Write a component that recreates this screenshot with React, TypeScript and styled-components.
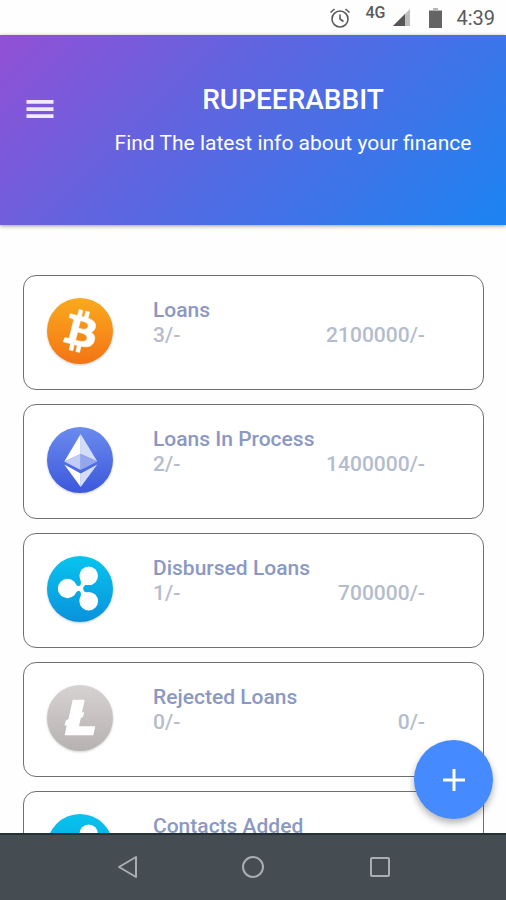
import React from "react";
import styled, { createGlobalStyle } from "styled-components";

const GlobalStyle = createGlobalStyle`
  *, *::before, *::after { box-sizing: border-box; }
  body {
    margin: 0;
    background: #fff;
    font-family: Roboto, "Liberation Sans", sans-serif;
  }
`;

const Screen = styled.div`
  display: flex;
  flex-direction: column;
  height: 100vh;
  overflow: hidden;
  background: #fefefe;
`;

const StatusBar = styled.div`
  display: flex;
  flex: none;
  align-items: center;
  justify-content: flex-end;
  height: 35px;
  padding: 0 11px;
  color: #5a5a5a;
`;

const NetworkLabel = styled.span`
  align-self: flex-start;
  margin: 4px 8px 0 14px;
  font-size: 16px;
  font-weight: 500;
  line-height: 18px;
`;

const Clock = styled.time`
  margin-left: 14px;
  font-size: 20px;
  line-height: 24px;
`;

const SignalIcon = styled.svg`
  margin-right: 19px;
`;

const Header = styled.header`
  display: flex;
  flex: none;
  align-items: flex-start;
  height: 190px;
  padding: 48px 0 0 22px;
  background: linear-gradient(135deg, #9250d5 0%, #5f65e0 40%, #1c84f2 100%);
  box-shadow: 0 1px 4px rgba(0, 0, 0, 0.4);
  color: #fff;
`;

const MenuButton = styled.button`
  display: flex;
  flex: none;
  margin: 8px 22px 0 0;
  padding: 0;
  border: 0;
  background: none;
  color: #f1eafc;
  cursor: pointer;
`;

const Heading = styled.div`
  flex: 1;
  text-align: center;
`;

const Title = styled.h1`
  margin: 0;
  font-size: 28px;
  font-weight: 500;
  line-height: 34px;
`;

const Subtitle = styled.p`
  margin: 13px 0 0;
  font-size: 21px;
  line-height: 26px;
`;

const Content = styled.main`
  position: relative;
  flex: 1;
  min-height: 0;
`;

const CardList = styled.ul`
  display: flex;
  flex-direction: column;
  gap: 14px;
  height: 100%;
  margin: 0;
  padding: 50px 22px 0 23px;
  overflow: hidden;
  list-style: none;
`;

const Card = styled.li`
  display: flex;
  flex: none;
  gap: 40px;
  height: 115px;
  padding: 22px 58px 0 23px;
  border: 1px solid #707070;
  border-radius: 13px;
  background: #fff;
`;

const CoinIcon = styled.svg`
  flex: none;
  width: 66px;
  height: 66px;
  overflow: visible;
  filter: drop-shadow(0 1px 1px rgba(0, 0, 0, 0.2));
`;

const CardBody = styled.div`
  flex: 1;
`;

const CardTitle = styled.h2`
  margin: 0;
  color: #8b98c4;
  font-size: 21px;
  font-weight: 500;
  line-height: 25px;
  white-space: nowrap;
`;

const Figures = styled.div`
  display: flex;
  justify-content: space-between;
  color: #b4bccd;
  font-size: 21px;
  font-weight: 500;
  line-height: 25px;
`;

const AddButton = styled.button`
  position: absolute;
  right: 13px;
  bottom: 14px;
  display: flex;
  align-items: center;
  justify-content: center;
  width: 79px;
  height: 79px;
  padding: 0;
  border: 0;
  border-radius: 50%;
  background: #468aff;
  box-shadow: 0 4px 7px rgba(0, 0, 0, 0.3);
  color: #fff;
  cursor: pointer;
`;

const NavBar = styled.nav`
  display: grid;
  grid-template-columns: repeat(3, 1fr);
  flex: none;
  height: 67px;
  padding: 0 12.5% 2px;
  border-top: 2px solid #243238;
  background: #464d52;
`;

const NavButton = styled.button`
  display: flex;
  align-items: center;
  justify-content: center;
  padding: 0;
  border: 0;
  background: none;
  color: #a9aeb0;
  cursor: pointer;
`;

type Coin = "bitcoin" | "ethereum" | "ripple" | "litecoin";

const coinColors: Record<Coin, [string, string]> = {
  bitcoin: ["#f9aa1e", "#f47414"],
  ethereum: ["#6b8bee", "#3c58dc"],
  ripple: ["#08c4ee", "#0a92dc"],
  litecoin: ["#d6d2d1", "#b7b2b1"],
};

const coinMarks: Record<Coin, React.ReactNode> = {
  bitcoin: (
    <path
      transform="translate(33 33) scale(2.15) translate(-16 -16)"
      fill="#fff"
      stroke="#fff"
      strokeWidth="0.3"
      d="M23.189 14.02c.314-2.096-1.283-3.223-3.465-3.975l.708-2.84-1.728-.43-.69 2.765c-.454-.114-.92-.22-1.385-.326l.695-2.783L15.596 6l-.708 2.839c-.376-.086-.746-.17-1.104-.26l.002-.009-2.384-.595-.46 1.846s1.283.294 1.256.312c.7.175.826.638.805 1.006l-.806 3.235c.048.012.11.03.18.057l-.183-.045-1.13 4.532c-.086.212-.303.531-.793.41.018.025-1.256-.313-1.256-.313l-.858 1.978 2.25.561c.418.105.828.215 1.231.318l-.715 2.872 1.727.43.708-2.84c.472.127.93.245 1.378.357l-.706 2.828 1.728.43.715-2.866c2.948.558 5.164.333 6.097-2.333.752-2.146-.037-3.385-1.588-4.192 1.13-.26 1.98-1.003 2.207-2.538zm-3.95 5.538c-.533 2.147-4.148.986-5.32.695l.95-3.805c1.172.293 4.929.872 4.37 3.11zm.535-5.569c-.487 1.953-3.495.96-4.47.717l.86-3.45c.975.243 4.118.696 3.61 2.733z"
    />
  ),
  ethereum: (
    <>
      <path d="M33.7 7 17.3 34.4 33.7 27z" fill="#fff" />
      <path d="M33.7 7 50.3 34.4 33.7 27z" fill="#d3dcf9" />
      <path d="M33.7 27 17.3 34.4 33.7 43z" fill="#c2cdf6" />
      <path d="M33.7 27 50.3 34.4 33.7 43z" fill="#94a6ee" />
      <path d="M17.3 37.5 33.7 46.5V60z" fill="#fff" />
      <path d="M50.3 37.5 33.7 46.5V60z" fill="#d3dcf9" />
    </>
  ),
  ripple: (
    <g fill="#fff">
      <circle cx="20.5" cy="32.5" r="9.7" />
      <circle cx="41.7" cy="19.8" r="9.3" />
      <circle cx="41.7" cy="45.2" r="9.3" />
      <path d="M26 25c2.5 3.800 3.800 5 6 5 2.200-.5 2.200-3.300 1.500-6.500l7 4.700c-3.200.8-4.300 2.200-4.300 4.300s1.100 3.500 4.300 4.300l-7 4.700c.7-3.200.7-6-1.500-6.500-2.200 0-3.500 1.200-6 5z" />
    </g>
  ),
  litecoin: (
    <path
      fill="#fff"
      d="M25.7 14.700L37.700 14.700L35 27.500L37.200 26.900L36 31.700L33.700 33.300L32 41.300L48.300 41.300L46.300 50.300L17.700 50.300L19.700 40.200L17.500 40.700L18.700 35.700L21.500 34Z"
    />
  ),
};

function CoinBadge({ coin, id }: { coin: Coin; id: string }) {
  const [top, bottom] = coinColors[coin];
  return (
    <CoinIcon viewBox="0 0 66 66" aria-hidden="true">
      <defs>
        <linearGradient id={id} x1="0" y1="0" x2="0" y2="1">
          <stop offset="0" stopColor={top} />
          <stop offset="1" stopColor={bottom} />
        </linearGradient>
      </defs>
      <circle cx="33" cy="33" r="33" fill={`url(#${id})`} />
      {coinMarks[coin]}
    </CoinIcon>
  );
}

const summaries: { title: string; count: string; amount: string; coin: Coin }[] = [
  { title: "Loans", count: "3/-", amount: "2100000/-", coin: "bitcoin" },
  { title: "Loans In Process", count: "2/-", amount: "1400000/-", coin: "ethereum" },
  { title: "Disbursed Loans", count: "1/-", amount: "700000/-", coin: "ripple" },
  { title: "Rejected Loans", count: "0/-", amount: "0/-", coin: "litecoin" },
  { title: "Contacts Added", count: "", amount: "", coin: "ripple" },
];

export default function App() {
  return (
    <>
      <GlobalStyle />
      <Screen>
        <StatusBar>
          <svg width="22" height="22" viewBox="0 0 22 22" fill="none" stroke="currentColor" aria-hidden="true">
            <circle cx="11" cy="12" r="8" strokeWidth="1.600" />
            <path d="M11 7.500V12l3.500 2.500M1.500 5.500l4-3.500M20.500 5.500l-4-3.500" strokeWidth="1.600" />
          </svg>
          <NetworkLabel>4G</NetworkLabel>
          <SignalIcon width="17" height="17" viewBox="0 0 17 17" aria-hidden="true">
            <path d="M0 17 17 0v17z" fill="#bdbdbd" />
            <path d="M0 17 12 5v12z" fill="#555" />
          </SignalIcon>
          <svg width="13" height="20" viewBox="0 0 13 20" aria-hidden="true">
            <path d="M4 0h5v2h4v2H0V2h4z" fill="#b5b5b5" />
            <path d="M0 3h13v17H0z" fill="#646464" />
          </svg>
          <Clock>4:39</Clock>
        </StatusBar>

        <Header>
          <MenuButton type="button" aria-label="Open menu">
            <svg width="36" height="36" viewBox="0 0 24 24" fill="currentColor" aria-hidden="true">
              <path d="M3 18h18v-2.500H3zm0-4.750h18v-2.500H3zM3 6v2.500h18V6z" />
            </svg>
          </MenuButton>
          <Heading>
            <Title>RUPEERABBIT</Title>
            <Subtitle>Find The latest info about your finance</Subtitle>
          </Heading>
        </Header>

        <Content>
          <CardList>
            {summaries.map((item, index) => (
              <Card key={item.title}>
                <CoinBadge coin={item.coin} id={`coin-${index}`} />
                <CardBody>
                  <CardTitle>{item.title}</CardTitle>
                  <Figures>
                    <span>{item.count}</span>
                    <span>{item.amount}</span>
                  </Figures>
                </CardBody>
              </Card>
            ))}
          </CardList>
          <AddButton type="button" aria-label="Add">
            <svg width="24" height="24" viewBox="0 0 24 24" stroke="currentColor" strokeWidth="3" aria-hidden="true">
              <path d="M12 1v22M1 12h22" />
            </svg>
          </AddButton>
        </Content>

        <NavBar aria-label="System">
          <NavButton type="button" aria-label="Back">
            <svg width="24" height="24" viewBox="0 0 24 24" fill="none" stroke="currentColor" strokeWidth="2" strokeLinejoin="round" aria-hidden="true">
              <path d="M4 12 21 2v20z" />
            </svg>
          </NavButton>
          <NavButton type="button" aria-label="Home">
            <svg width="24" height="24" viewBox="0 0 24 24" fill="none" stroke="currentColor" strokeWidth="2" aria-hidden="true">
              <circle cx="12" cy="12" r="10" />
            </svg>
          </NavButton>
          <NavButton type="button" aria-label="Recent apps">
            <svg width="24" height="24" viewBox="0 0 24 24" fill="none" stroke="currentColor" strokeWidth="2" aria-hidden="true">
              <rect x="3" y="3" width="18" height="18" rx="1" />
            </svg>
          </NavButton>
        </NavBar>
      </Screen>
    </>
  );
}
